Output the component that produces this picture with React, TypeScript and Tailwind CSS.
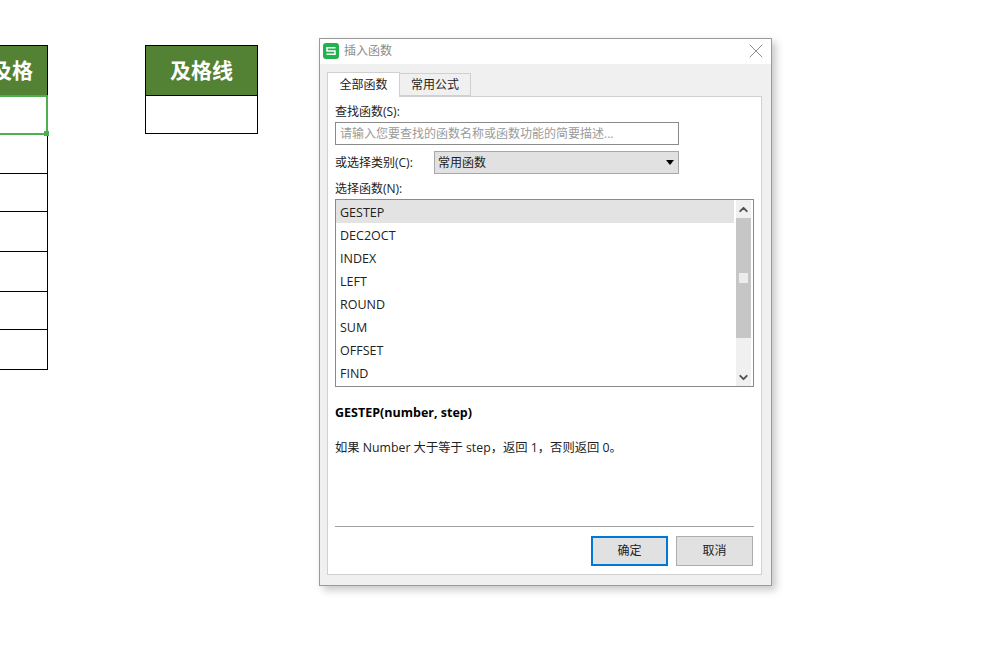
import { ChevronDown, ChevronUp, X } from 'lucide-react';

const functions = ['GESTEP', 'DEC2OCT', 'INDEX', 'LEFT', 'ROUND', 'SUM', 'OFFSET', 'FIND'];
const rowHeights = ['h-[39px]', 'h-[38px]', 'h-[40px]', 'h-[40px]', 'h-[38px]', 'h-[40px]'];

function SheetLogo() {
  return (
    <svg width="16" height="16" viewBox="0 0 16 16">
      <rect width="16" height="16" rx="3" fill="#22b14c" />
      <path d="M12.500 4.800H4v3.200h8v3.200H3.500" fill="none" stroke="#fff" strokeWidth="1.500" />
    </svg>
  );
}

function LeftColumn() {
  return (
    <div className="mt-[45px] flex w-[48px] shrink-0 flex-col border-r border-black">
      <div className="flex h-[51px] items-center justify-end border-y border-black bg-[#548235] pr-[14px] text-[21px] font-bold whitespace-nowrap text-white">
        及格
      </div>
      {/* selected cell */}
      <div className="relative -mt-px -mr-px h-[40px] border-y-2 border-r-2 border-[#4caf50] bg-white">
        <div className="absolute -right-[3px] -bottom-[3px] h-[5px] w-[5px] bg-[#4caf50]" />
      </div>
      {rowHeights.map((h, i) => (
        <div key={i} className={`${h} border-b border-black bg-white`} />
      ))}
    </div>
  );
}

function RightColumn() {
  return (
    <div className="mt-[45px] ml-[97px] flex w-[113px] shrink-0 flex-col border-x border-black">
      <div className="flex h-[51px] items-center justify-center border-y border-black bg-[#548235] text-[21px] font-bold text-white">
        及格线
      </div>
      <div className="h-[38px] border-b border-black bg-white" />
    </div>
  );
}

function FunctionList() {
  return (
    <div className="mt-[1px] flex h-[188px] w-[419px] border border-[#8a8a8a] bg-white text-[12.500px]">
      <div className="flex-1">
        {functions.map((name, i) => (
          <div
            key={name}
            className={`flex h-[23px] items-center pt-[4px] pl-[4px] ${i === 0 ? 'bg-[#e3e3e3]' : ''}`}
          >
            {name}
          </div>
        ))}
      </div>
      <div className="flex w-[19px] flex-col pr-[2px] pl-[2px]">
        <div className="flex h-full flex-col items-center bg-[#f0f0f0]">
          <div className="flex h-[18px] items-center justify-center">
            <ChevronUp size={13} strokeWidth={3.500} color="#505050" />
          </div>
          <div className="flex h-[120px] w-full items-center justify-center bg-[#c6c6c6]">
            <div className="h-[10px] w-[9px] bg-[#ececec]" />
          </div>
          <div className="flex-1" />
          <div className="flex h-[18px] items-center justify-center">
            <ChevronDown size={13} strokeWidth={3.500} color="#505050" />
          </div>
        </div>
      </div>
    </div>
  );
}

function Dialog() {
  return (
    <div className="mt-[38px] ml-[61px] flex h-[548px] w-[453px] shrink-0 flex-col border border-[#9a9a9a] bg-[#f0f0f0] shadow-[4px_4px_8px_rgba(0,0,0,0.22)]">
      <div className="flex h-[25px] items-center bg-white pr-[3px] pb-[2px] pl-[3px]">
        <SheetLogo />
        <span className="ml-[5px] text-[#8c8c8c]">插入函数</span>
        <X className="ml-auto" size={24} strokeWidth={0.800} color="#6e6e6e" />
      </div>

      <div className="flex flex-1 flex-col pt-[7px] pr-[9px] pb-[10px] pl-[7px]">
        <div className="flex h-[25px] items-end">
          <div className="z-10 -mb-px flex h-[25px] w-[73px] items-center justify-center border border-b-0 border-[#d0d0d0] bg-white">
            全部函数
          </div>
          <div className="flex h-[23px] w-[71px] items-center justify-center border border-l-0 border-[#d0d0d0] bg-[#f0f0f0]">
            常用公式
          </div>
        </div>

        <div className="flex flex-1 flex-col border border-[#d0d0d0] bg-white px-[7px]">
          <div className="mt-[5px] h-[20px] leading-[20px]">查找函数(S):</div>
          <div className="flex h-[23px] w-[344px] items-center border border-[#8a8a8a] pl-[4px] text-[#9a9a9a]">
            请输入您要查找的函数名称或函数功能的简要描述...
          </div>
          <div className="mt-[6px] flex h-[23px] items-center">
            <span className="w-[99px]">或选择类别(C):</span>
            <div className="flex h-[23px] w-[245px] items-center justify-between border border-[#a8a8a8] bg-[#e1e1e1] pr-[4px] pl-[3px]">
              常用函数
              <span className="h-0 w-0 border-x-[4px] border-t-[5px] border-x-transparent border-t-black" />
            </div>
          </div>
          <div className="mt-[5px] h-[19px] leading-[19px]">选择函数(N):</div>
          <FunctionList />
          <div className="mt-[16px] h-[19px] text-[12.500px] leading-[19px] font-bold text-black">GESTEP(number, step)</div>
          <div className="mt-[16px] h-[19px] text-[12.300px] leading-[19px] whitespace-nowrap">如果 Number 大于等于 step，返回 1，否则返回 0。</div>

          <div className="mt-[69px] w-[419px] border-t border-[#a0a0a0]" />
          <div className="mt-[9px] flex w-[418px] justify-end gap-[8px]">
            <button className="h-[30px] w-[77px] border-2 border-[#0078d7] bg-[#e1e1e1]">确定</button>
            <button className="h-[30px] w-[77px] border border-[#adadad] bg-[#e1e1e1]">取消</button>
          </div>
        </div>
      </div>
    </div>
  );
}

export default function App() {
  return (
    <div className="flex h-[653px] w-[996px] items-start overflow-hidden bg-white font-['Open_Sans','Noto_Sans_CJK_SC',sans-serif] text-[12px] text-[#222]">
      <LeftColumn />
      <RightColumn />
      <Dialog />
    </div>
  );
}
